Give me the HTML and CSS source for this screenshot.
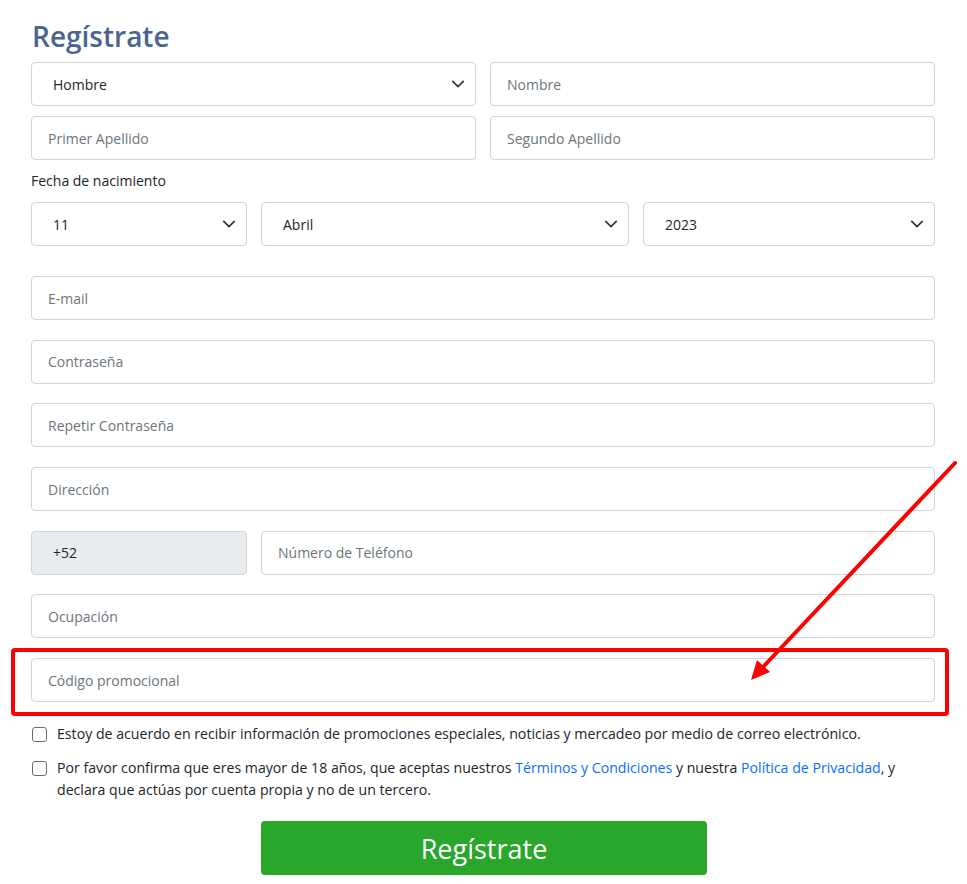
FILE: index.html
```html
<!DOCTYPE html>
<html lang="es">
<head>
<meta charset="utf-8">
<title>Regístrate</title>
<link rel="stylesheet" href="styles.css">
</head>
<body>
<div class="page">
  <h1 class="title">Regístrate</h1>
  <form class="form">
    <div class="row two">
      <div class="select"><span>Hombre</span><svg class="chev" viewBox="0 0 16 16"><path d="M2 5l6 6 6-6" fill="none" stroke="#343a40" stroke-width="2" stroke-linecap="round" stroke-linejoin="round"/></svg></div>
      <div class="input">Nombre</div>
    </div>
    <div class="row two tight">
      <div class="input">Primer Apellido</div>
      <div class="input">Segundo Apellido</div>
    </div>
    <div class="label">Fecha de nacimiento</div>
    <div class="row date">
      <div class="select"><span>11</span><svg class="chev" viewBox="0 0 16 16"><path d="M2 5l6 6 6-6" fill="none" stroke="#343a40" stroke-width="2" stroke-linecap="round" stroke-linejoin="round"/></svg></div>
      <div class="select"><span>Abril</span><svg class="chev" viewBox="0 0 16 16"><path d="M2 5l6 6 6-6" fill="none" stroke="#343a40" stroke-width="2" stroke-linecap="round" stroke-linejoin="round"/></svg></div>
      <div class="select"><span>2023</span><svg class="chev" viewBox="0 0 16 16"><path d="M2 5l6 6 6-6" fill="none" stroke="#343a40" stroke-width="2" stroke-linecap="round" stroke-linejoin="round"/></svg></div>
    </div>
    <div class="stack">
      <div class="input">E-mail</div>
      <div class="input">Contraseña</div>
      <div class="input">Repetir Contraseña</div>
      <div class="input">Dirección</div>
      <div class="row phone">
        <div class="input prefix">+52</div>
        <div class="input">Número de Teléfono</div>
      </div>
      <div class="input">Ocupación</div>
      <div class="input">Código promocional</div>
    </div>
    <div class="checks">
      <div class="check"><span class="box"></span><p>Estoy de acuerdo en recibir información de promociones especiales, noticias y mercadeo por medio de correo electrónico.</p></div>
      <div class="check"><span class="box"></span><p>Por favor confirma que eres mayor de 18 años, que aceptas nuestros <a href="#">Términos y Condiciones</a> y nuestra <a href="#">Política de Privacidad</a>, y declara que actúas por cuenta propia y no de un tercero.</p></div>
    </div>
    <div class="actions"><button type="button" class="btn">Regístrate</button></div>
  </form>
  <svg class="annot" width="967" height="884" viewBox="0 0 967 884">
    <rect x="13" y="650" width="934" height="64" rx="2" fill="none" stroke="#fe0000" stroke-width="4"/>
    <line x1="955" y1="463" x2="764" y2="666" stroke="#fe0000" stroke-width="4" stroke-linecap="round"/>
    <polygon points="751,680 757,660 770,672" fill="#fe0000"/>
  </svg>
</div>
</body>
</html>
```
FILE: styles.css
```css
* { box-sizing: border-box; }
html, body { margin: 0; padding: 0; background: #fff; }
body {
  font-family: "Open Sans", "Noto Sans", "Liberation Sans", sans-serif;
  color: #212529;
  font-size: 14px;
}
.page {
  position: relative;
  width: 967px;
  height: 884px;
  padding: 15px 0 0 31px;
  overflow: hidden;
}
.title {
  margin: 0 0 5px 1px;
  font-size: 28px;
  line-height: 42px;
  font-weight: 600;
  color: #4a6590;
}
.form { width: 904px; }
.row { display: flex; gap: 14px; }
.row.two { display: grid; grid-template-columns: 1fr 1fr; gap: 14px; }
.row.tight { margin-top: 10px; }
.input, .select {
  height: 44px;
  border: 1px solid #ced4da;
  border-radius: 4px;
  background: #fff;
  display: flex;
  align-items: center;
}
.input { padding-left: 16px; color: #6c757d; }
.select { padding: 0 10px 0 21px; justify-content: space-between; color: #212529; }
.chev { width: 14px; height: 14px; }
.label { margin: 11px 0 0; line-height: 20px; height: 20px; color: #212529; }
.label + .row { margin-top: 11px; }
.date .select:nth-child(1) { width: 216px; flex: none; }
.date .select:nth-child(2) { width: 368px; flex: none; }
.date .select:nth-child(3) { flex: 1; }
.stack { margin-top: 30px; display: flex; flex-direction: column; gap: 19.7px; }
.phone .prefix { width: 216px; flex: none; background: #e9ecef; color: #212529; padding-left: 21px; }
.phone .input:last-child { flex: 1; }
.checks { margin-top: 21px; display: flex; flex-direction: column; gap: 12px; }
.check { display: flex; gap: 10px; align-items: flex-start; }
.check .box {
  flex: none;
  width: 15px; height: 15px;
  margin: 4px 0 0 1px;
  border: 1px solid #6b6f73;
  border-radius: 3px;
}
.check p { margin: 0; line-height: 22px; color: #212529; font-size: 14.15px; }
.check a { color: #0d6efd; text-decoration: none; }
.actions { margin-top: 20px; padding-left: 230px; }
.btn {
  width: 446px; height: 54px;
  border: none; border-radius: 4px;
  background: #28a72b;
  color: #fff;
  font-family: "Open Sans", "Noto Sans", sans-serif;
  font-size: 27px;
}
.annot { position: absolute; left: 0; top: 0; pointer-events: none; }
```
